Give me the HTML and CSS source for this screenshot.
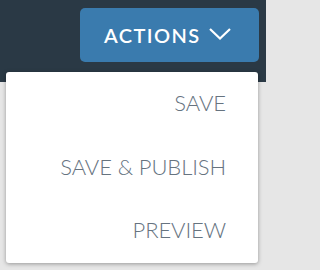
FILE: index.html
```html
<!DOCTYPE html>
<html>
<head>
<meta charset="utf-8">
<link rel="stylesheet" href="styles.css">
</head>
<body>
<div class="page">
  <header class="topbar">
    <button class="actions-btn">
      <span class="actions-label">ACTIONS</span>
      <svg class="chevron" width="22" height="12" viewBox="0 0 22 12"><path d="M1 1 L11 10.5 L21 1" fill="none" stroke="#ffffff" stroke-width="2.2"/></svg>
    </button>
  </header>
  <main class="content"></main>
  <ul class="menu">
    <li class="menu-item">SAVE</li>
    <li class="menu-item">SAVE &amp; PUBLISH</li>
    <li class="menu-item">PREVIEW</li>
  </ul>
</div>
</body>
</html>
```
FILE: styles.css
```css
html, body {
  margin: 0;
  padding: 0;
}
body {
  width: 266px;
  height: 270px;
  overflow: hidden;
  font-family: Lato, "Noto Sans", sans-serif;
  background: #e6e6e6;
}
.page {
  position: relative;
  width: 266px;
  height: 270px;
}
.topbar {
  height: 82px;
  background: #2a3945;
  display: flex;
  justify-content: flex-end;
  align-items: flex-start;
  padding: 8px 7px 0 0;
  box-sizing: border-box;
}
.actions-btn {
  width: 179px;
  height: 54px;
  border: none;
  border-radius: 5px;
  background: #3a7bae;
  color: #ffffff;
  display: flex;
  align-items: center;
  padding: 0 0 0 24px;
  gap: 9px;
  font-family: Lato, "Noto Sans", sans-serif;
  font-weight: 600;
  font-size: 20px;
  letter-spacing: 1.4px;
  box-sizing: border-box;
}
.actions-label {
  line-height: 1;
}
.chevron {
  display: block;
  margin-top: -2px;
}
.content {
  height: 188px;
}
.menu {
  position: absolute;
  left: 6px;
  top: 72px;
  width: 252px;
  height: 191px;
  margin: 0;
  padding: 0;
  list-style: none;
  background: #ffffff;
  border-radius: 3px;
  box-shadow: 0 1px 4px rgba(0,0,0,0.35);
  box-sizing: border-box;
}
.menu-item {
  height: 63.5px;
  line-height: 61px;
  text-align: right;
  padding-right: 32px;
  font-size: 22px;
  font-weight: 300;
  letter-spacing: -0.1px;
  color: #66737f;
}
```
